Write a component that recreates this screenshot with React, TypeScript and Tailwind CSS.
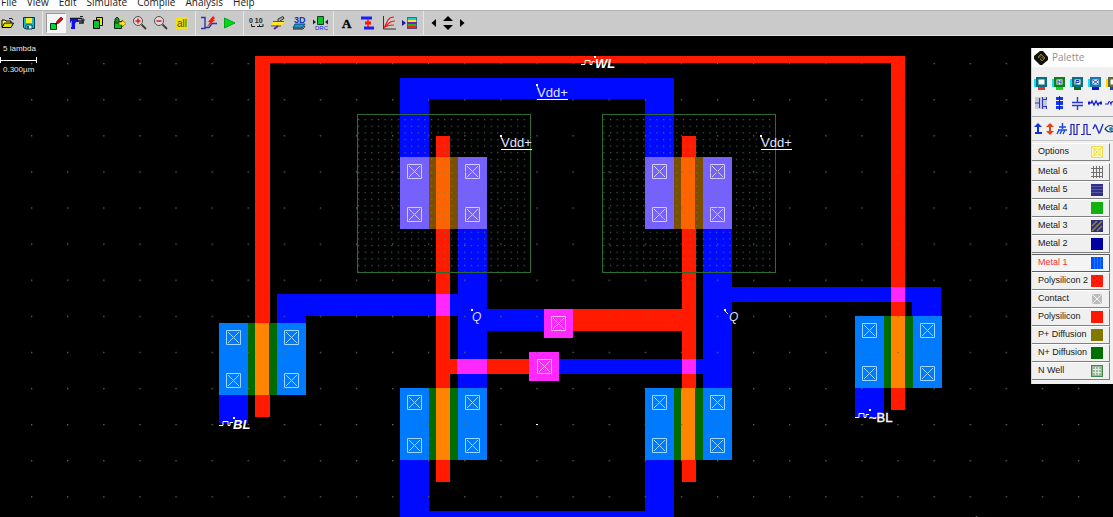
import React from "react";
import type { ReactNode } from "react";

const RED = "#ff1a00";
const BLUE = "#000aff";
const PINK = "#ff28ff";

const menus = ["File", "View", "Edit", "Simulate", "Compile", "Analysis", "Help"];

/* ---------- toolbar ---------- */

function Icon({ children }: { children: ReactNode }) {
  return (
    <svg width="16" height="16" viewBox="0 0 16 16" fill="none" className="block shrink-0">
      {children}
    </svg>
  );
}

function Tool({ label, active, children }: { label: string; active?: boolean; children: ReactNode }) {
  return (
    <button
      type="button"
      aria-label={label}
      aria-pressed={active}
      className={
        active
          ? "flex size-5 shrink-0 items-center justify-center border border-[#f8f8f8] border-t-[#999] border-l-[#999] bg-[#f6f6f6]"
          : "flex size-5 shrink-0 items-center justify-center"
      }
    >
      <Icon>{children}</Icon>
    </button>
  );
}

function Group({ children }: { children: ReactNode }) {
  return (
    <div className="ml-[3px] flex h-full items-center gap-px border-l border-[#e6e6e6] pl-[3px]">{children}</div>
  );
}

function Toolbar() {
  return (
    <div className="flex h-[26px] shrink-0 items-center overflow-hidden border-t border-b border-t-[#b4b4b4] border-b-[#e4e4e4] bg-[#cacaca]">
      <div className="-ml-[3px] flex items-center gap-0.5">
        <Tool label="Open">
          <path d="M3 12V5h3l1 1h5v2" fill="#ffff30" stroke="#000" />
          <path d="M3 12.5 5.500 8h9L12 12.500z" fill="#e8e000" stroke="#000" />
          <path d="M10 3.500h3l1 1.500" stroke="#222" />
        </Tool>
        <Tool label="Save">
          <path d="M2.500 2.500h11v11h-10l-1-1z" fill="#18b8c8" stroke="#003848" />
          <path d="M5 3h6v5H5z" fill="#f8f020" />
          <path d="M5 10h6v4H5z" fill="#e8ffff" stroke="#004050" />
          <path d="M6 11h2v3H6z" fill="#006070" />
        </Tool>
      </div>
      <Group>
        <Tool label="Draw box" active>
          <path d="M2.500 8.500h6v6h-6z" fill="#00d838" stroke="#064010" />
          <path d="M8 9l1-3 4-4 2 2-4 4z" fill="#d81010" stroke="#501010" strokeWidth=".7" />
          <path d="M7 9.500 9 8" stroke="#000" />
        </Tool>
        <Tool label="Delete">
          <path d="M1 4h8v3H7l-1 2v5H2V8L1 7z" fill="#1010f0" />
          <path d="M1 3.500h12M8 6h6v2h-4" stroke="#181830" strokeWidth="1.500" />
          <path d="M11 1.500h3M13 4h2v2h-2z" stroke="#222" />
          <path d="M2 6h1v6H2z" fill="#7090ff" />
        </Tool>
        <Tool label="Copy">
          <path d="M6.500 2.500h6v8h-6z" fill="#e8e820" stroke="#000" />
          <path d="M3.500 5.500h6v8h-6z" fill="#00c828" stroke="#000" />
          <path d="M7 4h3v1H7z" fill="#18a018" />
        </Tool>
        <Tool label="Move">
          <path d="M3.500 6.500h7v7h-7z" fill="#00c828" stroke="#102810" />
          <path d="M6 2l2 2v4H4V4z" fill="#109818" stroke="#103810" />
          <path d="M8 7h3V5l4 3.500L11 12v-2H8z" fill="#ffe828" stroke="#605000" strokeWidth=".7" />
          <path d="M9 2.500h5v10" stroke="#e8d850" strokeDasharray="1.500 1" />
        </Tool>
        <Tool label="Zoom in">
          <circle cx="6" cy="6" r="4.500" fill="#e0dada" stroke="#505050" />
          <path d="M3.500 6h5M6 3.500v5" stroke="#e01818" strokeWidth="1.500" />
          <path d="M9.500 9.500 14 14" stroke="#443838" strokeWidth="1.800" />
        </Tool>
        <Tool label="Zoom out">
          <circle cx="6" cy="6" r="4.500" fill="#e0dada" stroke="#505050" />
          <path d="M3.500 6h5" stroke="#e01818" strokeWidth="1.500" />
          <path d="M9.500 9.500 14 14" stroke="#443838" strokeWidth="1.800" />
        </Tool>
        <Tool label="View all">
          <path d="M2 2h12v12H2z" fill="#f4e018" />
          <text x="3" y="12" fontSize="10" fill="#504800" fontFamily="Liberation Sans, sans-serif">all</text>
        </Tool>
      </Group>
      <Group>
        <Tool label="Cross-section">
          <path d="M0 2.500h4v11H0M4 12.500h4l3-4h5" stroke="#2838a8" strokeWidth="1.400" />
          <path d="M6 12 9 7H7l5-6 2 2-2 2h2z" fill="#ff1800" />
        </Tool>
        <Tool label="Run simulation">
          <path d="M2.500 3 13 8 2.500 13z" fill="#00d818" stroke="#00a818" />
        </Tool>
      </Group>
      <Group>
        <Tool label="Measure">
          <text x="0" y="8" fontSize="7" fontWeight="700" fill="#222" fontFamily="Liberation Sans, sans-serif">0 10</text>
          <path d="M2.500 9v2.500H6M8 11.500h6V9M10.500 11V9.500" stroke="#222" />
        </Tool>
        <Tool label="2D view">
          <path d="M3 7h12l-3 3H1z" fill="#ffe820" />
          <path d="M1 11h10M3 6.500h11" stroke="#555" />
          <path d="M8 6V4l5-2.500 1 2L10 6" fill="#aaa" stroke="#333" />
          <path d="M4 14 8 11" stroke="#7020a0" strokeWidth="2" />
        </Tool>
        <Tool label="3D view">
          <text x="3" y="8" fontSize="9" fontWeight="700" fill="#1830b0" fontFamily="Liberation Sans, sans-serif">3D</text>
          <path d="M4 9h10l-3 4H2z" fill="#1898c8" stroke="#104880" />
          <path d="M2 14h10l2-3" stroke="#222" />
        </Tool>
        <Tool label="Design rule check">
          <path d="M5.500 1.500h6v8h-6z" fill="#00c828" stroke="#104018" />
          <path d="M1 4.500 4 7 1 9.500zM16 4.500 13 7l3 2.500z" fill="#222" />
          <text x="3" y="15" fontSize="6" fill="#1818f0" fontFamily="Liberation Sans, sans-serif">DRC</text>
        </Tool>
      </Group>
      <Group>
        <Tool label="Add text">
          <text x="3" y="13" fontSize="13" fontWeight="700" fill="#000" stroke="#000" strokeWidth=".4" fontFamily="Liberation Serif, serif">A</text>
        </Tool>
        <Tool label="Connect layers">
          <path d="M1 3h11M4 13h10" stroke="#1420ff" strokeWidth="3" />
          <path d="M8 4v8" stroke="#ff1800" strokeWidth="1.500" />
          <path d="M5 8h6" stroke="#ff1800" strokeWidth="3" />
        </Tool>
        <Tool label="MOS characteristics">
          <path d="M2.500 1v13H15" stroke="#333" />
          <path d="M3 13 7 5q2-3 6-3M3 13 8 8q2-2 6-2M3 13q3-3 10-3" stroke="#f02020" strokeWidth="1.200" />
        </Tool>
        <Tool label="Layer palette">
          <path d="M5 2h10v3H5z" fill="#10d0d8" />
          <path d="M5 5h10v2H5z" fill="#f8e820" />
          <path d="M5 7h10v2H5z" fill="#8018c8" />
          <path d="M5 9h10v2H5z" fill="#18b818" />
          <path d="M5 11h10v3H5z" fill="#f82020" />
          <path d="M5.500 2.500h9v11h-9z" stroke="#2050a0" strokeWidth=".7" />
          <path d="M0 5l4 3-4 3z" fill="#182098" />
        </Tool>
      </Group>
      <div className="ml-[3px] flex h-full items-center border-l border-[#e6e6e6] pl-0.5">
        <button type="button" aria-label="Scroll left" className="flex w-4 justify-center">
          <Icon><path d="M10 4v8L5.500 8z" fill="#000" /></Icon>
        </button>
        <div className="flex w-3 flex-col items-center gap-1">
          <button type="button" aria-label="Scroll up">
            <svg width="10" height="5" className="block"><path d="M5 0l5 5H0z" fill="#000" /></svg>
          </button>
          <button type="button" aria-label="Scroll down">
            <svg width="10" height="5" className="block"><path d="M0 0h10L5 5z" fill="#000" /></svg>
          </button>
        </div>
        <button type="button" aria-label="Scroll right" className="flex w-4 justify-center">
          <Icon><path d="M6 4v8l4.500-4z" fill="#000" /></Icon>
        </button>
      </div>
    </div>
  );
}

/* ---------- layout canvas ---------- */

function Via({ x, y, color = "#a8d8ff" }: { x: number; y: number; color?: string }) {
  return (
    <path
      d={`M${x + 0.5} ${y + 0.5}h14v14h-14zM${x + 2} ${y + 2}l11 11M${x + 13} ${y + 2}l-11 11`}
      stroke={color}
      fill="none"
    />
  );
}

function Transistor({ x, y, kind }: { x: number; y: number; kind: "n" | "p" }) {
  const side = kind === "n" ? "#007aff" : "#7660ff";
  const diff = kind === "n" ? "#006c00" : "#7a5000";
  const gate = kind === "n" ? "#ff8400" : "#ff6400";
  const via = kind === "n" ? "#9cd8ff" : "#d4ccff";
  return (
    <g>
      <rect x={x} y={y} width="87" height="72" fill={side} />
      <rect x={x + 29} y={y} width="29" height="72" fill={diff} />
      <rect x={x + 36} y={y} width="14" height="72" fill={gate} />
      <Via x={x + 7} y={y + 7} color={via} />
      <Via x={x + 65} y={y + 7} color={via} />
      <Via x={x + 7} y={y + 50} color={via} />
      <Via x={x + 65} y={y + 50} color={via} />
    </g>
  );
}

function Clock({ x, y }: { x: number; y: number }) {
  return <path d={`M${x} ${y}h4v-4h5v4h2v-3h3`} stroke="#fff" fill="none" />;
}

function Canvas() {
  return (
    <svg className="block h-full w-full" fontFamily="Liberation Sans, Arial, sans-serif">
      <defs>
        <pattern id="grid" x="31" y="63" width="36.1" height="36.1" patternUnits="userSpaceOnUse">
          <rect width="1.300" height="1.300" fill="#6c6c48" />
        </pattern>
        <pattern id="well" x="358" y="119" width="6.63" height="6.63" patternUnits="userSpaceOnUse">
          <rect width="1.200" height="1.200" fill="#588868" fillOpacity=".75" />
        </pattern>
      </defs>
      <g transform="translate(0 -36)">
        {/* metal 1 */}
        <g fill={BLUE}>
          <path d="M400 78h274v80h-29V99H429v59h-29z" />
          <path d="M458 229h29v160h-29zM703 229h29v160h-29z" />
          <path d="M277 294h181v22H306v8h-29z" />
          <path d="M486 309h58v22h-58zM558 359h146v15H558z" />
          <path d="M732 287h209v30h-29v-15H732z" />
          <path d="M219 394h29v29h-29zM855 387h29v30h-29z" />
          <path d="M400 460h29v51h216v-51h29v60H400z" />
        </g>
        {/* polysilicon */}
        <g fill={RED}>
          <path d="M255 56h650v354h-14V63H270v354h-15z" />
          <path d="M436 136h14v346h-14zM682 136h14v346h-14z" />
          <path d="M573 309h109v22H573zM450 359h80v15h-80z" />
        </g>
        {/* poly over metal */}
        <g fill={PINK}>
          <path d="M436 294h14v22h-14zM457 359h30v15h-30zM682 359h14v15h-14zM891 287h14v15h-14z" />
          <path d="M544 309h29v29h-29zM529 352h30v29h-30z" />
        </g>
        <Via x={551} y={316} color="#ffb4ff" />
        <Via x={537} y={359} color="#ffb4ff" />

        <Transistor x={400} y={157} kind="p" />
        <Transistor x={645} y={157} kind="p" />
        <Transistor x={219} y={323} kind="n" />
        <Transistor x={400} y={388} kind="n" />
        <Transistor x={645} y={388} kind="n" />
        <Transistor x={855} y={316} kind="n" />

        {/* n wells */}
        <rect x="357.500" y="114.500" width="173" height="158" fill="url(#well)" stroke="#2c6c30" />
        <rect x="602.500" y="114.500" width="173" height="158" fill="url(#well)" stroke="#2c6c30" />
        <rect x="0" y="36" width="100%" height="100%" fill="url(#grid)" />

        {/* node labels */}
        <g fill="#fff">
          <path d="M536 84h2v2h-2zM500 135h2v2h-2zM760 135h2v2h-2zM594 56h2v2h-2zM471 309h2v2h-2zM724 309h2v2h-2zM233 417h2v2h-2zM869 409h2v2h-2zM536 424h2v1h-2z" />
          <path d="M537 99h31v1h-31zM501 149h31v1h-31zM761 149h31v1h-31z" />
        </g>
        <path d="M537 86l2 4M501 137l2 4M761 137l2 4M725 311l3 3" stroke="#ddd" />
        <g fill="#e0e4ff" fontSize="13">
          <text x="537" y="97">Vdd+</text>
          <text x="501" y="147">Vdd+</text>
          <text x="761" y="147">Vdd+</text>
        </g>
        <g fill="#d4dcff" fontSize="12" fontStyle="italic">
          <text x="472" y="321">Q</text>
          <text x="729" y="321">Q</text>
        </g>
        <g fill="#fff" fontSize="13" fontWeight="700">
          <text x="595" y="68" fontStyle="italic">WL</text>
          <text x="233" y="429" fontStyle="italic">BL</text>
          <text x="869" y="422" fontWeight="400" stroke="#fff" strokeWidth=".4">~BL</text>
        </g>
        <Clock x={581} y={64.5} />
        <Clock x={219} y={425.5} />
        <Clock x={855} y={417.5} />

        {/* scale */}
        <g fill="#e8e8e8" fontSize="8">
          <text x="3" y="51">5 lambda</text>
          <text x="3" y="72">0.300µm</text>
        </g>
        <path d="M0 60.500h36M36.500 57v6M.5 57v6" stroke="#fff" />
        <text x="883" y="527" fontSize="15" fill="#707070" fontFamily="Open Sans, sans-serif">Activate Windows</text>
      </g>
    </svg>
  );
}

/* ---------- palette ---------- */

function Contact({ label, under, letter, main = "#08707c", side = "#10e0f0" }: { label: string; under: string; letter?: ReactNode; main?: string; side?: string }) {
  return (
    <button type="button" aria-label={label} className="flex w-[18px] shrink-0 justify-center">
      <Icon>
        <path d="M1 4h5v8H1z" fill={side} />
        <path d="M5 9h7v6H5z" fill={under} />
        <path d="M3 2h11v10H3z" fill={main} />
        <path d="M5.500 4.500h6v5h-6z" fill="#fff" />
        {letter}
      </Icon>
    </button>
  );
}

function Device({ label, children }: { label: string; children: ReactNode }) {
  return (
    <button type="button" aria-label={label} className="flex w-[18px] shrink-0 justify-center">
      <Icon>{children}</Icon>
    </button>
  );
}

function Source({ label, children }: { label: string; children: ReactNode }) {
  return (
    <button type="button" aria-label={label} className="w-3 shrink-0">
      <svg width="12" height="14" viewBox="0 0 12 14" fill="none" className="block">
        {children}
      </svg>
    </button>
  );
}

const layers: { name: string; swatch: ReactNode }[] = [
  {
    name: "Metal 6",
    swatch: <path d="M2.500 0v12M5.500 0v12M8.500 0v12M11.500 0v12M0 2.500h12M0 6.500h12M0 10.500h12" stroke="#707070" />,
  },
  {
    name: "Metal 5",
    swatch: (
      <>
        <rect width="12" height="12" fill="#30308c" />
        <path d="M0 2.500h12M0 5.500h12M0 8.500h12" stroke="#5858a0" />
      </>
    ),
  },
  {
    name: "Metal 4",
    swatch: (
      <>
        <rect width="12" height="12" fill="#10b010" />
        <path d="M0 0l12 12M0 4l8 8M4 0l8 8M0 8l4 4M8 0l4 4" stroke="#589010" />
      </>
    ),
  },
  {
    name: "Metal 3",
    swatch: (
      <>
        <rect width="12" height="12" fill="#2c3084" />
        <path d="M1 6l5-5M1 11 11 1M6 11l5-5" stroke="#948434" strokeWidth="1.500" />
      </>
    ),
  },
  { name: "Metal 2", swatch: <rect width="12" height="12" fill="#0000a0" /> },
  {
    name: "Metal 1",
    swatch: (
      <>
        <rect width="12" height="12" fill="#0050ff" />
        <path d="M3.500 0v12M6.500 0v12M9.500 0v12" stroke="#187cff" />
      </>
    ),
  },
  {
    name: "Polysilicon 2",
    swatch: (
      <>
        <rect width="12" height="12" fill="#ff1c08" />
        <path d="M2 3h2M8 3h2M2 8h2M8 8h2M6 0v2M6 5v2" stroke="#c81008" />
      </>
    ),
  },
  {
    name: "Contact",
    swatch: (
      <>
        <rect x="1" y="1" width="10" height="10" rx="2" fill="#bcbcbc" />
        <path d="M2 2l8 8M10 2l-8 8" stroke="#f4f4f4" />
      </>
    ),
  },
  { name: "Polysilicon", swatch: <rect width="12" height="12" fill="#ff1800" /> },
  { name: "P+ Diffusion", swatch: <rect width="12" height="12" fill="#807800" /> },
  { name: "N+ Diffusion", swatch: <rect width="12" height="12" fill="#007000" /> },
  {
    name: "N Well",
    swatch: (
      <>
        <rect x=".5" y=".5" width="11" height="11" fill="#9cb89c" stroke="#408848" />
        <path d="M4.500 2v8M7.500 2v8M2 4.500h8M2 7.500h8" stroke="#e0ece0" />
      </>
    ),
  },
];

function LayerButton({ name, swatch, selected }: { name: string; swatch: ReactNode; selected?: boolean }) {
  return (
    <button
      type="button"
      aria-pressed={selected}
      className={
        selected
          ? "mt-px flex h-[18px] w-full items-center justify-between border-t border-r border-b border-[#606060] bg-[#f4f4f4] px-1.5 text-[#ff3030]"
          : "flex h-[18px] w-full items-center justify-between border-t border-r border-b border-t-white border-r-[#808080] border-b-[#808080] bg-[#f0f0f0] px-1.5 text-[#181818]"
      }
    >
      <span className="whitespace-nowrap">{name}</span>
      <svg width="12" height="12" viewBox="0 0 12 12" fill="none" className="block shrink-0">
        {swatch}
      </svg>
    </button>
  );
}

function Palette() {
  return (
    <section
      aria-label="Palette"
      className="absolute top-3 right-0 w-[82px] overflow-hidden border-l border-[#d0d0d0] bg-[#f0f0f0] pb-1 font-['Liberation_Sans',Arial,sans-serif] text-[9px]"
    >
      <h2 className="flex h-[19px] items-center gap-1 bg-white pl-0.5 font-['Open_Sans','Noto_Sans',sans-serif] text-[10px] text-[#909090]">
        <svg width="14" height="14" viewBox="0 0 14 14" fill="none" className="block shrink-0">
          <path d="M6 0h3l5 6v3l-6 5H6L0 8V5z" fill="#111" />
          <path d="M4 6l3-3 4 4-3 3z" fill="#50481c" stroke="#a09840" strokeWidth=".7" />
          <path d="M6 6l3 3M8 5 5 8" stroke="#111" />
        </svg>
        Palette
      </h2>
      <div className="flex h-7 items-center pt-1">
        <Contact label="Metal to poly" under="#f03030" />
        <Contact
          label="N diffusion contact"
          under="#10d818"
          main="#08801c"
          letter={<path d="M7 9V5.500l3 3V5" stroke="#1818a0" />}
        />
        <Contact
          label="P diffusion contact"
          under="#087010"
          letter={<path d="M7 9.500V5.500h3v2H7" stroke="#2030b0" />}
        />
        <Contact
          label="Via"
          under="#1010d0"
          main="#1878b0"
          letter={<path d="M6 5l5 4M11 5 6 9" stroke="#2838c0" />}
        />
        <Contact label="Stacked contact" under="#1840d0" main="#606838" side="#ffd800" />
      </div>
      <div className="flex h-[22px] items-start border-b border-[#a8a8a8]">
        <Device label="MOS transistor">
          <path d="M2 2h12v12H2z" fill="#c4c8dc" />
          <path d="M2 8h4M6.500 3v10M9.500 2v12M10 4.500h3M10 11.500h3M13.500 2v3M13.500 11v3" stroke="#3038c0" />
        </Device>
        <Device label="Resistor">
          <path d="M5 2h7v3H5zM5 6h7v4H5zM5 11h7v3H5z" fill="#1838e8" />
          <path d="M8.500 1v14" stroke="#1820a0" />
        </Device>
        <Device label="Capacitor">
          <path d="M8.500 2v5M3 7.500h11M3 10.500h11M8.500 11v4" stroke="#2838d0" strokeWidth="1.400" />
        </Device>
        <Device label="Inductor">
          <path d="M2 8h2l1-2 2 4 2-4 2 4 1-2h2" stroke="#1820c8" strokeWidth="1.400" />
          <path d="M1 6.500h2v3H1zM13 6.500h2v3h-2z" fill="#1820c8" />
        </Device>
        <Device label="Coil">
          <path d="M0 9h3q1-5 3 0 1-5 3 0 1-5 3 0h4" stroke="#1820c8" strokeWidth="1.200" />
        </Device>
      </div>
      <div className="flex h-6 items-center border-b border-[#c4c4c4]">
        <Source label="Supply">
          <path d="M6 1l4 4H7v5h3v2H3v-2h2V5H2z" fill="#1030d8" />
        </Source>
        <Source label="High supply">
          <path d="M6 1l4 4H7v4h3l-4 4-4-4h3V5H2z" fill="#e84010" />
        </Source>
        <Source label="Ground">
          <path d="M6.500 1v6M3 5h7M2 8h9M3 8l-2 4M6 8l-2 4M9 8l-2 4" stroke="#1848d8" strokeWidth="1.400" />
        </Source>
        <Source label="Clock">
          <path d="M1 12.500h2v-10h3v10h3v-10h3" stroke="#2020b0" strokeWidth="1.200" />
        </Source>
        <Source label="Pulse">
          <path d="M1 12.500h3v-10h3v10h4" stroke="#2020c0" strokeWidth="1.200" />
        </Source>
        <Source label="Sinus">
          <path d="M1 7 3 3l1 1 3 7 1-1 3-8" stroke="#2030c8" strokeWidth="1.400" />
        </Source>
        <Source label="Visible node">
          <path d="M1 7q5-7 11 0-6 6-11 0z" stroke="#204060" strokeWidth="1.200" />
          <circle cx="7" cy="7" r="2" fill="#1890c0" />
        </Source>
      </div>
      <div className="flex flex-col pt-0.5 pr-[3px]">
        <LayerButton
          name="Options"
          swatch={
            <>
              <rect x=".5" y=".5" width="11" height="11" fill="#fffbc0" stroke="#f0e050" />
              <path d="M1 1l10 10M11 1 1 11M3 3h6v6H3z" stroke="#f0e050" />
            </>
          }
        />
        <div className="flex flex-col pt-0.5">
          {layers.map((l) => (
            <LayerButton key={l.name} name={l.name} swatch={l.swatch} selected={l.name === "Metal 1"} />
          ))}
        </div>
      </div>
    </section>
  );
}

export default function App() {
  return (
    <div className="flex h-screen flex-col overflow-hidden bg-black">
      <nav className="flex h-2.5 shrink-0 items-end gap-2.5 overflow-hidden bg-white pl-px font-['Open_Sans','Noto_Sans',sans-serif] text-[10px] leading-4 text-[#202020]">
        {menus.map((m) => (
          <button key={m} type="button" className="shrink-0">
            {m}
          </button>
        ))}
      </nav>
      <Toolbar />
      <main className="relative min-h-0 flex-1">
        <Canvas />
        <Palette />
      </main>
    </div>
  );
}
